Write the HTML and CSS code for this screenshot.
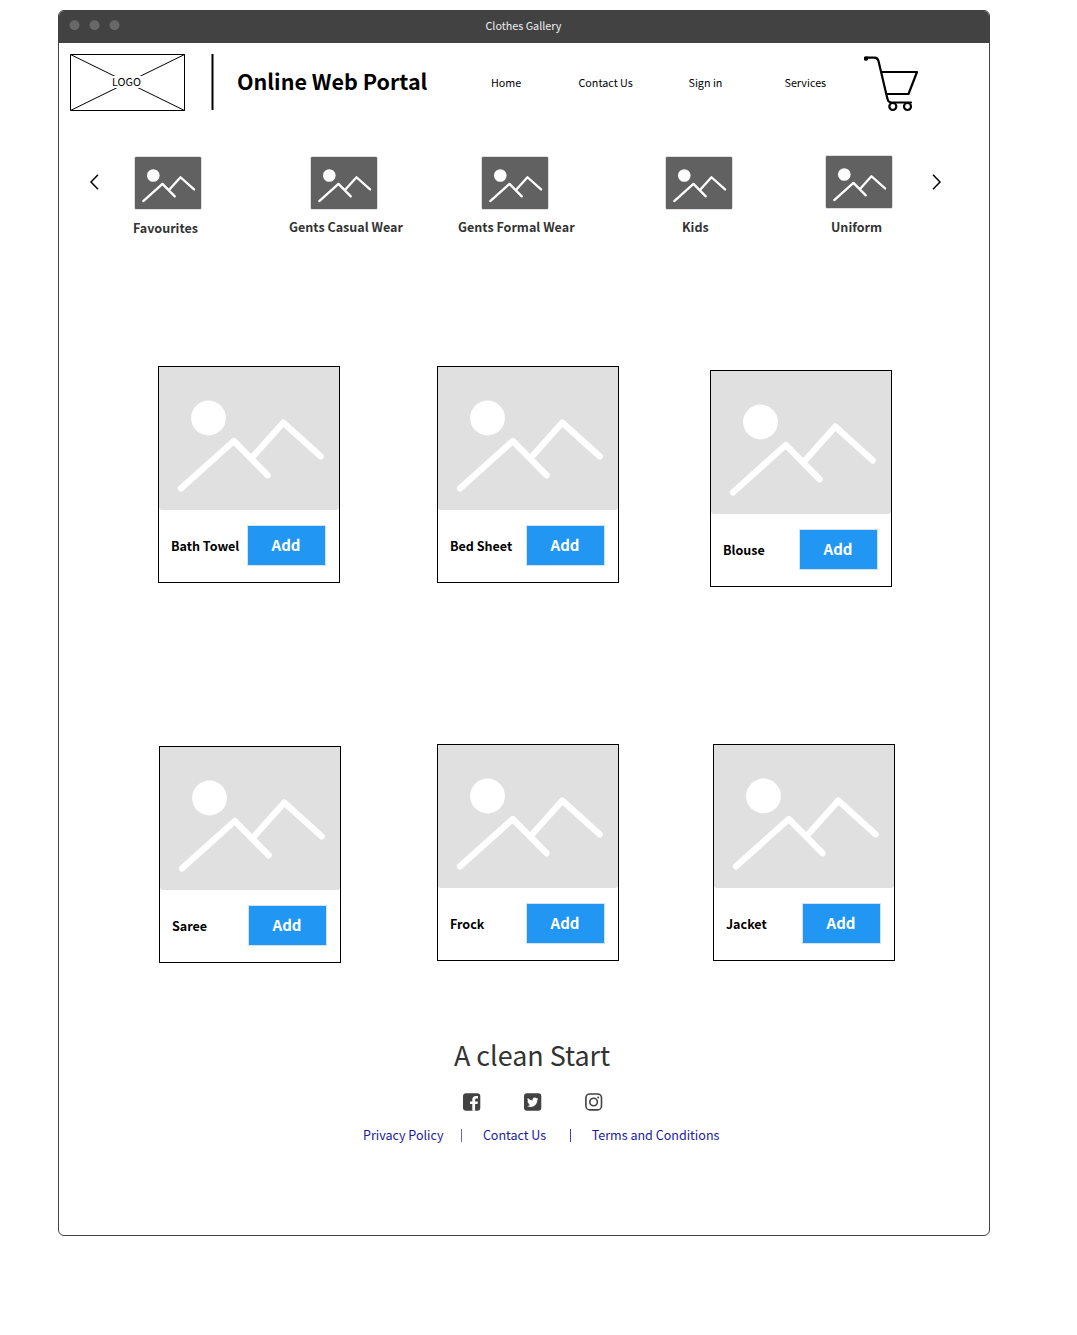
FILE: index.html
```html
<!DOCTYPE html>
<html lang="en">
<head>
<meta charset="utf-8">
<title>Clothes Gallery</title>
<link rel="stylesheet" href="styles.css">
</head>
<body>
<svg class="defs" width="0" height="0">
  <symbol id="scene" viewBox="0 0 180 143">
    <circle cx="49.5" cy="51" r="17.4" fill="#fff"/>
    <path d="M22 121.3 74.8 74l33.8 34.3M92.7 91l31.6-35.3 37.4 33.6" fill="none" stroke="#fff" stroke-width="6.3" stroke-linecap="round" stroke-linejoin="round"/>
  </symbol>
</svg>
<div class="window">
  <div class="titlebar">
    <svg class="dots" width="60" height="12" viewBox="0 0 60 12" fill="#686868"><circle cx="5.500" cy="5.200" r="5"/><circle cx="25.500" cy="5.200" r="5"/><circle cx="45.500" cy="5.200" r="5"/></svg>
    <span class="caption">Clothes Gallery</span>
  </div>
  <header class="header">
    <div class="logo">
      <svg width="115" height="57" viewBox="0 0 115 57" fill="none" stroke="#000"><path d="M.5.5h114v56H.5zM.5.5l114 56M.5 56.5l114-56"/></svg>
      <span>LOGO</span>
    </div>
    <svg class="rule" width="3" height="56" viewBox="0 0 3 56"><path d="M1.500 0V56" stroke="#000" stroke-width="2"/></svg>
    <h1>Online Web Portal</h1>
    <nav><a>Home</a><a>Contact Us</a><a>Sign in</a><a>Services</a></nav>
    <svg class="cart" width="56" height="57" viewBox="0 0 56 57" fill="none" stroke="#000" stroke-width="2.2" stroke-linecap="round" stroke-linejoin="round"><path d="M3 2.700H10.500Q13.500 2.700 14.500 6L22.500 40 23.700 44.500Q24.500 47.500 27.500 47.500H47M17.500 17H53L44.500 39H22.500"/><circle cx="28.800" cy="51.500" r="3.500"/><circle cx="43.500" cy="51.500" r="3.500"/><circle cx="2" cy="3.500" r="1.200" fill="#000"/></svg>
  </header>
  <section class="categories">
    <svg class="arrow" width="10" height="16" viewBox="0 0 10 16"><path d="M9 .7 2 8l7 7.300"/></svg>
    <div class="category favourites"><svg><use href="#scene"/></svg><b>Favourites</b></div>
    <div class="category casual"><svg><use href="#scene"/></svg><b>Gents Casual Wear</b></div>
    <div class="category formal"><svg><use href="#scene"/></svg><b>Gents Formal Wear</b></div>
    <div class="category kids"><svg><use href="#scene"/></svg><b>Kids</b></div>
    <div class="category uniform"><svg><use href="#scene"/></svg><b>Uniform</b></div>
    <svg class="arrow" width="10" height="16" viewBox="0 0 10 16"><path d="M2 .7 9 8l-7 7.300"/></svg>
  </section>
  <main>
    <div class="products first">
      <article class="card"><svg><use href="#scene"/></svg><div class="info"><b>Bath Towel</b><button>Add</button></div></article>
      <article class="card"><svg><use href="#scene"/></svg><div class="info"><b>Bed Sheet</b><button>Add</button></div></article>
      <article class="card blouse"><svg><use href="#scene"/></svg><div class="info"><b>Blouse</b><button>Add</button></div></article>
    </div>
    <div class="products second">
      <article class="card saree"><svg><use href="#scene"/></svg><div class="info"><b>Saree</b><button>Add</button></div></article>
      <article class="card"><svg><use href="#scene"/></svg><div class="info"><b>Frock</b><button>Add</button></div></article>
      <article class="card"><svg><use href="#scene"/></svg><div class="info"><b>Jacket</b><button>Add</button></div></article>
    </div>
  </main>
  <footer>
    <h2>A clean Start</h2>
    <div class="social">
      <svg width="18" height="18" viewBox="0 0 18 18"><rect y=".2" width="17.300" height="17.500" rx="3" fill="#424242"/><path d="M9.300 17.700V11H7V8.400H9.300V6.500Q9.300 2.900 12.900 2.900H15V5.500H13.500Q12.100 5.500 12.100 6.800V8.400H14.900L14.500 11H12.100V17.700Z" fill="#fff"/></svg>
      <svg width="18" height="18" viewBox="0 0 18 18"><rect y=".2" width="17.300" height="17.500" rx="3" fill="#424242"/><path d="M14.500 5.700 13.300 6.800C13.500 11.500 9.800 14 6.600 14Q4.600 14 3 13 5 13.100 6.300 12.100 4.700 11.900 4.200 10.500H5.200Q3.400 9.900 3.400 8.100L4.400 8.400Q2.800 7 3.800 5.100 5.800 7.400 8.600 7.500C8.100 5 10.800 3.500 12.500 5.200L14 4.700 13 6Z" fill="#fff"/></svg>
      <svg width="18" height="18" viewBox="0 0 18 18" fill="none" stroke="#424242" stroke-width="1.600"><rect x=".9" y="1" width="15.600" height="15.900" rx="4"/><circle cx="8.600" cy="9" r="3.800"/><circle cx="13.200" cy="4.500" r="1" fill="#424242" stroke="none"/></svg>
    </div>
    <div class="links"><a>Privacy Policy</a><i></i><a>Contact Us</a><i></i><a>Terms and Conditions</a></div>
  </footer>
</div>
</body>
</html>
```
FILE: styles.css
```css
* { box-sizing: border-box; }
body {
  margin: 0;
  padding: 10px 0 0 58px;
  background: #fff;
  color: #000;
  font-family: "Noto Sans CJK SC", "Noto Sans", sans-serif;
  white-space: nowrap;
}
.defs { display: block; }
svg { display: block; flex: none; }
.window {
  width: 932px;
  height: 1226px;
  border: 1px solid #424242;
  border-radius: 6px;
  overflow: hidden;
}
.titlebar {
  display: flex;
  height: 32px;
  background: #424242;
}
.dots { margin: 9px 356.500px 0 10px; }
.caption { color: #eee; font-size: 10.750px; line-height: 30px; }
.header { display: flex; height: 114px; padding: 11px 0 0 11px; }
.logo { display: grid; width: 115px; height: 57px; place-items: center; }
.logo > * { grid-area: 1 / 1; }
.logo span { padding: 0 1px; margin: 0 2px 1px 0; background: #fff; font-size: 10.750px; line-height: 12px; }
.rule { margin-left: 26px; }
h1 { width: 254px; margin: 0 0 0 23px; font-size: 21.500px; line-height: 53px; }
nav { display: grid; grid-template-columns: 87.500px 110px 96px 79.500px; font-size: 10.750px; line-height: 57px; }
.cart { margin: 1px 0 0 .4px; }
.categories { display: flex; height: 199px; }
.arrow { margin: 17px 0 0 30px; fill: none; stroke: #000; stroke-width: 1.5; }
.category { display: flex; flex-direction: column; }
.category svg { width: 66px; height: 52px; background: #616161; border-radius: 1px; box-shadow: 0 0 0 .5px #bbb; }
.category b { color: #333; font-size: 12.540px; line-height: 36px; }
.favourites { width: 156px; margin-left: 34px; }
.favourites svg { margin-left: 2px; }
.favourites b { line-height: 38px; }
.casual { width: 169px; }
.casual svg { margin-left: 22px; }
.formal { width: 208px; }
.formal svg { margin-left: 24px; }
.kids { width: 160px; }
.kids b { padding-left: 16px; }
.uniform { width: 75px; margin-top: -1px; }
.uniform b { padding-left: 5px; line-height: 38px; }
.products { display: grid; align-items: start; }
.first { grid-template-columns: 279px 273px 182px; height: 378px; margin-left: 99px; padding-top: 10px; }
.second { grid-template-columns: 278px 276px 182px; height: 300px; margin-left: 100px; padding-top: 10px; }
.card { width: 182px; height: 217px; border: 1px solid #000; }
.blouse { margin-top: 4px; }
.saree { margin-top: 2px; }
.card > svg { width: 180px; height: 143px; background: #e0e0e0; border-radius: 0 0 3px 3px; }
.info { display: flex; justify-content: space-between; padding: 15px 13px 0 12px; font-size: 12.540px; line-height: 41px; }
button {
  width: 79px;
  height: 41px;
  border: 1px solid #d5e2ed;
  padding: 0 1px 2px 0;
  background: #2196f3;
  color: #fff;
  font: bold 15px/37px "Noto Sans CJK SC", sans-serif;
}
footer { color: #333; }
h2 { margin: 0 0 0 395px; font-size: 26.880px; font-weight: 400; line-height: 42px; }
.social { display: flex; gap: 43px; margin: 17px 0 0 404px; }
.links { display: flex; margin: 14px 0 0 304px; color: #1a1a9c; font-size: 12.540px; line-height: 20px; }
.links i { width: 1px; height: 13px; margin: 4px 21px 0 17.300px; background: #6a6ac0; }
.links i + a + i { margin-left: 23.500px; background: #3f3fae; }
```
